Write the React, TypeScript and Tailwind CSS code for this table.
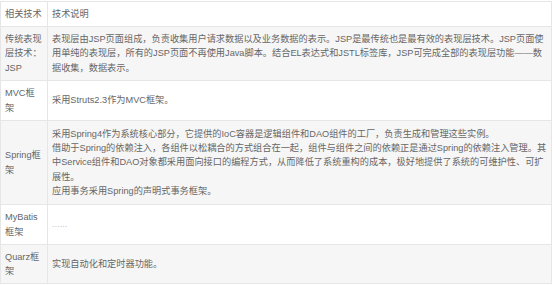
const rows: { name: string; lines: string[]; muted?: boolean }[] = [
  {
    name: "传统表现层技术：JSP",
    lines: [
      "表现层由JSP页面组成，负责收集用户请求数据以及业务数据的表示。JSP是最传统也是最有效的表现层技术。JSP页面使",
      "用单纯的表现层，所有的JSP页面不再使用Java脚本。结合EL表达式和JSTL标签库，JSP可完成全部的表现层功能——数",
      "据收集，数据表示。",
    ],
  },
  { name: "MVC框架", lines: ["采用Struts2.3作为MVC框架。"] },
  {
    name: "Spring框架",
    lines: [
      "采用Spring4作为系统核心部分，它提供的IoC容器是逻辑组件和DAO组件的工厂，负责生成和管理这些实例。",
      "借助于Spring的依赖注入，各组件以松耦合的方式组合在一起，组件与组件之间的依赖正是通过Spring的依赖注入管理。其",
      "中Service组件和DAO对象都采用面向接口的编程方式，从而降低了系统重构的成本，极好地提供了系统的可维护性、可扩",
      "展性。",
      "应用事务采用Spring的声明式事务框架。",
    ],
  },
  { name: "MyBatis框架", lines: ["......"], muted: true },
  { name: "Quarz框架", lines: ["实现自动化和定时器功能。"] },
];

export default function App() {
  return (
    <div className="h-[285px] w-[554px] bg-white pt-px font-['Liberation_Sans','Noto_Sans_CJK_SC',sans-serif] text-[9.2px] leading-[14.3px] text-[#666666]">
      <div className="grid w-[552px] grid-cols-[47px_504px] grid-rows-[25px_54px_40px_84px_40px_39px] border-l border-t border-[#e6e6e6]">
        <div className="flex items-center border-b border-r border-[#e6e6e6] px-[4px]">相关技术</div>
        <div className="flex items-center border-b border-r border-[#e6e6e6] px-[4px]">技术说明</div>
        {rows.map((row, i) => (
          <div key={row.name} className="contents">
            <div
              className={`flex items-center border-b border-r border-[#e6e6e6] px-[4px] ${
                i % 2 === 0 ? "bg-[#f6f6f6]" : "bg-white"
              }`}
            >
              {row.name}
            </div>
            <div
              className={`flex flex-col justify-center border-b border-r border-[#e6e6e6] px-[4px] ${
                i % 2 === 0 ? "bg-[#f6f6f6]" : "bg-white"
              } ${row.muted ? "text-[#c4c4c4]" : ""}`}
            >
              {row.lines.map((line) => (
                <div key={line} className="whitespace-nowrap">
                  {line}
                </div>
              ))}
            </div>
          </div>
        ))}
      </div>
    </div>
  );
}
